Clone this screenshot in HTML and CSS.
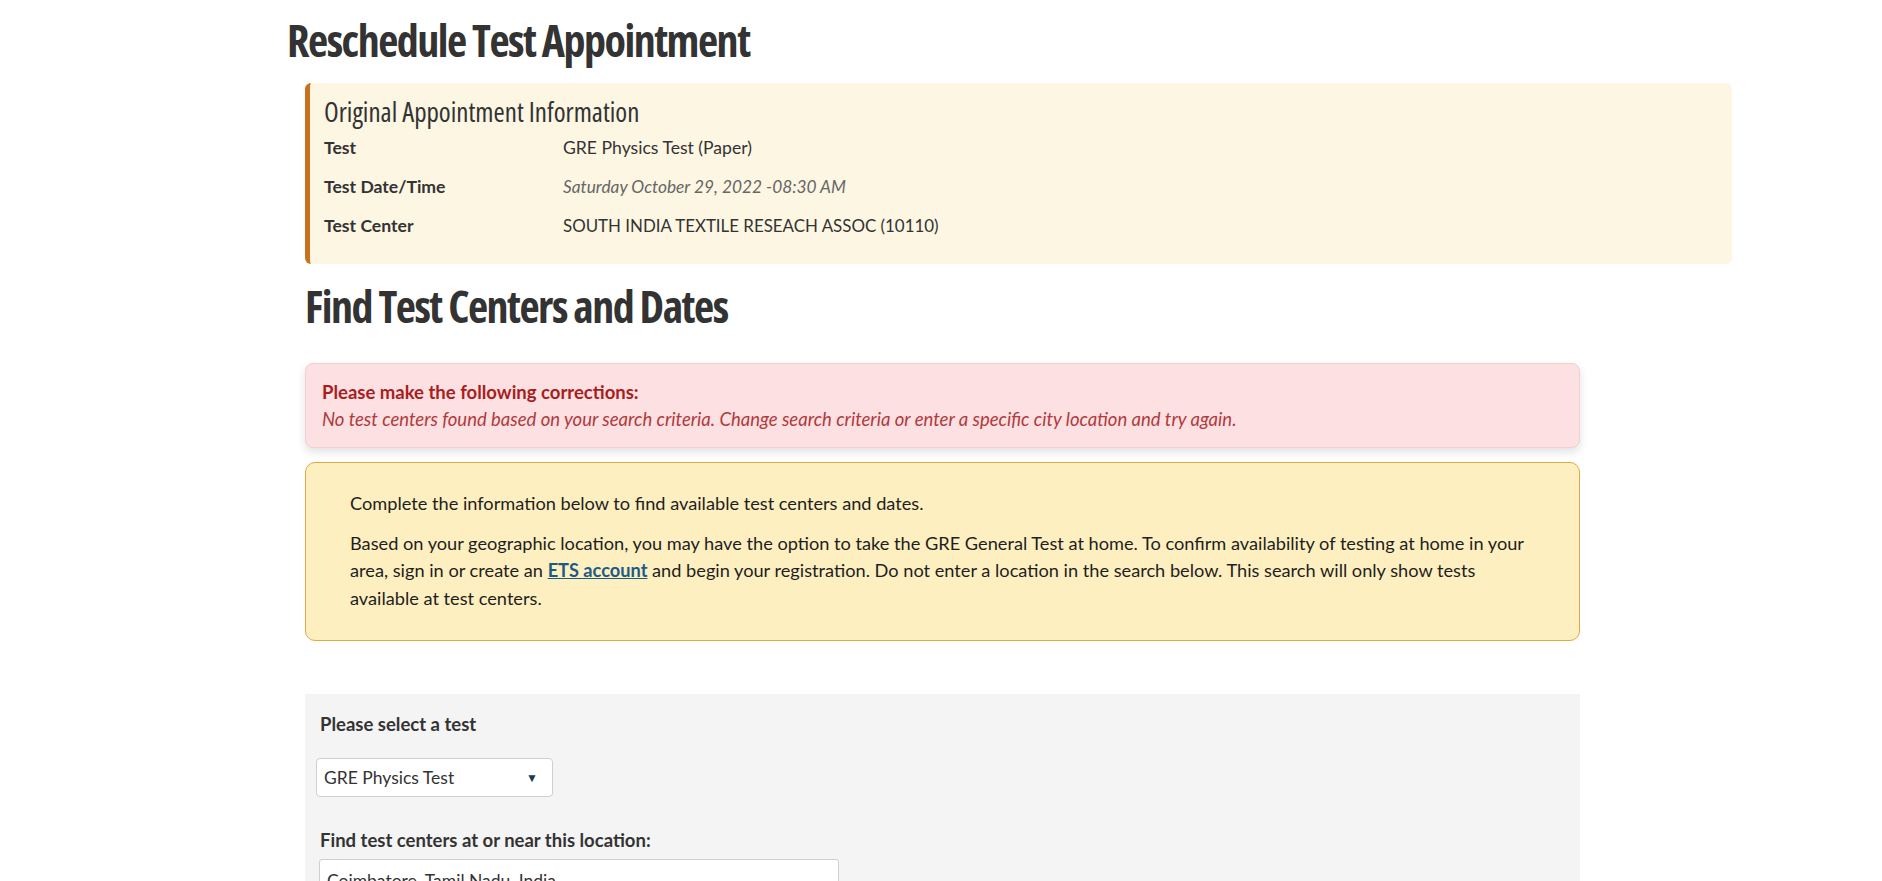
FILE: index.html
```html
<!DOCTYPE html>
<html lang="en">
<head>
<meta charset="utf-8">
<title>Reschedule Test Appointment</title>
<link rel="stylesheet" href="styles.css">
</head>
<body>
<div class="page">
  <h1 class="page-title">Reschedule Test Appointment</h1>
  <div class="content">
    <section class="orig-box">
      <h3 class="orig-title">Original Appointment Information</h3>
      <div class="orig-row"><span class="orig-label">Test</span><span class="orig-value">GRE Physics Test (Paper)</span></div>
      <div class="orig-row"><span class="orig-label">Test Date/Time</span><span class="orig-value date">Saturday October 29, 2022 -08:30 AM</span></div>
      <div class="orig-row"><span class="orig-label">Test Center</span><span class="orig-value caps">SOUTH INDIA TEXTILE RESEACH ASSOC (10110)</span></div>
    </section>

    <h2 class="section-title">Find Test Centers and Dates</h2>

    <div class="error-box">
      <p class="error-head">Please make the following corrections:</p>
      <p class="error-msg">No test centers found based on your search criteria. Change search criteria or enter a specific city location and try again.</p>
    </div>

    <div class="info-box">
      <p>Complete the information below to find available test centers and dates.</p>
      <p>Based on your geographic location, you may have the option to take the GRE General Test at home. To confirm availability of testing at home in your area, sign in or create an <a href="#" class="link">ETS account</a> and begin your registration. Do not enter a location in the search below. This search will only show tests available at test centers.</p>
    </div>

    <form class="search-panel">
      <label class="field-label">Please select a test</label>
      <div class="select">
        <span class="select-text">GRE Physics Test</span>
        <span class="select-arrow">&#9660;</span>
      </div>
      <label class="field-label second">Find test centers at or near this location:</label>
      <div class="text-input">Coimbatore, Tamil Nadu, India</div>
    </form>
  </div>
</div>
</body>
</html>
```

FILE: styles.css
```css
html, body {
  margin: 0;
  padding: 0;
  background: #ffffff;
}

body {
  font-family: "Lato", "Liberation Sans", sans-serif;
  color: #222222;
  font-size: 18.5px;
}

.page {
  padding: 12px 0 0 287px;
}

.page-title,
.section-title {
  margin: 0;
  font-family: "Open Sans", "Liberation Sans", sans-serif;
  font-stretch: 75%;
  font-weight: 700;
  font-size: 44px;
  line-height: 56px;
  letter-spacing: -1.5px;
  color: #333333;
}

.content {
  margin-left: 18px;
}

.orig-box {
  margin-top: 15px;
  width: 1408px;
  background: #fcf6e3;
  border-left: 5px solid #c8711f;
  border-radius: 6px;
  padding: 12px 0 19px 14px;
}

.orig-title {
  margin: 0;
  font-family: "Open Sans", "Liberation Sans", sans-serif;
  font-stretch: 75%;
  font-weight: 400;
  font-size: 27px;
  line-height: 33px;
  color: #333333;
}

.orig-row {
  display: grid;
  grid-template-columns: 239px 1fr;
  height: 39px;
  align-items: center;
  font-size: 17.6px;
  color: #333333;
}

.orig-label {
  font-weight: 700;
}

.orig-value.date {
  font-style: italic;
  font-size: 17.3px;
  color: #666666;
}

.orig-value.caps {
  font-size: 16.9px;
}

.section-title {
  margin-top: 14px;
}

.error-box {
  margin-top: 29px;
  width: 1241px;
  background: #fde0e1;
  border: 1px solid #f2cfd0;
  border-radius: 8px;
  padding: 15px 16px 14px 16px;
  box-shadow: 0 4px 10px rgba(0, 0, 0, 0.12);
}

.error-box p {
  margin: 0;
  line-height: 27px;
}

.error-head {
  font-weight: 700;
  color: #a81e1e;
}

.error-msg {
  font-style: italic;
  color: #b03a3e;
}

.info-box {
  margin-top: 14px;
  width: 1193px;
  background: #fdefc0;
  border: 1px solid #e6a740;
  border-radius: 10px;
  padding: 27px 36px 28px 44px;
  font-size: 18.2px;
}

.info-box p {
  margin: 0;
  line-height: 27.5px;
  color: #1e1e1e;
}

.info-box p + p {
  margin-top: 12px;
}

.link {
  color: #1b5b86;
  font-weight: 700;
  text-decoration: underline;
}

.search-panel {
  margin-top: 53px;
  width: 1260px;
  min-height: 200px;
  background: #f4f4f4;
  padding: 18px 0 0 15px;
  display: flex;
  flex-direction: column;
  align-items: flex-start;
}

.field-label {
  font-weight: 700;
  font-size: 18.5px;
  line-height: 24px;
  color: #333333;
}

.select {
  margin-top: 22px;
  margin-left: -4px;
  box-sizing: border-box;
  width: 237px;
  height: 39px;
  background: #ffffff;
  border: 1px solid #cfcfcf;
  border-radius: 4px;
  display: flex;
  align-items: center;
  justify-content: space-between;
  padding: 0 14px 0 7px;
  font-size: 17.5px;
  color: #333333;
}

.select-arrow {
  font-size: 12px;
  color: #173a50;
}

.field-label.second {
  margin-top: 31px;
}

.text-input {
  margin-top: 7px;
  margin-left: -1px;
  box-sizing: border-box;
  width: 520px;
  height: 42px;
  background: #ffffff;
  border: 1px solid #cfcfcf;
  border-radius: 3px;
  padding: 10px 7px;
  font-size: 17.5px;
  color: #333333;
}
```
